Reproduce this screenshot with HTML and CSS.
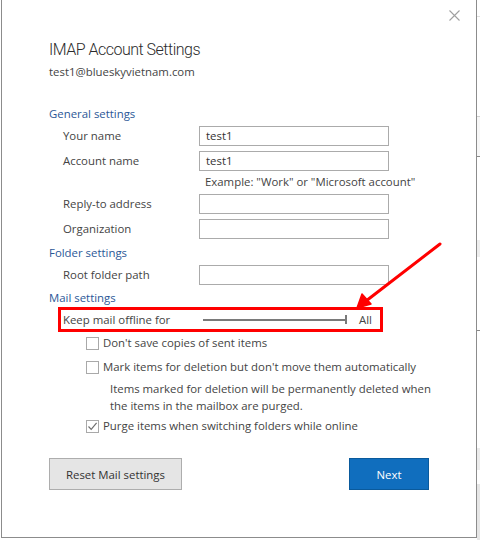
FILE: index.html
```html
<!DOCTYPE html>
<html>
<head>
<meta charset="utf-8">
<link rel="stylesheet" href="styles.css">
</head>
<body>
<div class="screen">
  <div class="edge-left"></div>
  <div class="dialog">
    <div class="topbar">
      <svg class="close" width="11" height="11" viewBox="0 0 11 11"><path d="M0.5 0.5L10.5 10.5M10.5 0.5L0.5 10.5" stroke="#a0a0a0" stroke-width="1.1" fill="none"/></svg>
    </div>
    <div class="title">IMAP Account Settings</div>
    <div class="email">test1@blueskyvietnam.com</div>

    <div class="heading h-general">General settings</div>
    <div class="row r-first"><span class="label">Your name</span><span class="input">test1</span></div>
    <div class="row r-next"><span class="label">Account name</span><span class="input">test1</span></div>
    <div class="hint">Example: "Work" or "Microsoft account"</div>
    <div class="row r-after-hint"><span class="label">Reply-to address</span><span class="input"></span></div>
    <div class="row r-next"><span class="label">Organization</span><span class="input"></span></div>

    <div class="heading h-folder">Folder settings</div>
    <div class="row r-first"><span class="label">Root folder path</span><span class="input"></span></div>

    <div class="heading h-mail">Mail settings</div>
    <div class="offline">
      <span class="offline-label">Keep mail offline for</span>
      <span class="slider"><span class="track"></span><span class="tick"></span></span>
      <span class="all">All</span>
    </div>

    <div class="check c1"><span class="box"></span><span>Don't save copies of sent items</span></div>
    <div class="check c2"><span class="box"></span><span>Mark items for deletion but don't move them automatically</span></div>
    <div class="note">Items marked for deletion will be permanently deleted when<br>the items in the mailbox are purged.</div>
    <div class="check c3"><span class="box checked"><svg width="11" height="11" viewBox="0 0 11 11"><path d="M1.5 5.5L4.2 8.3L9.6 1.8" stroke="#6f6f6f" stroke-width="1.2" fill="none"/></svg></span><span>Purge items when switching folders while online</span></div>

    <div class="buttons">
      <span class="btn btn-reset">Reset Mail settings</span>
      <span class="btn btn-next">Next</span>
    </div>
  </div>
  <div class="edge-right"></div>
</div>
<svg class="arrow" width="480" height="540" viewBox="0 0 480 540">
  <line x1="440" y1="244" x2="366" y2="301" stroke="#ff0000" stroke-width="3" stroke-linecap="round"/>
  <path d="M357 308L362 294L371 304Z" fill="#ff0000" stroke="#ff0000" stroke-width="1.5" stroke-linejoin="round"/>
</svg>
</body>
</html>
```
FILE: styles.css
```css
* { box-sizing: border-box; }
html, body { margin: 0; padding: 0; background: #ffffff; }
body {
  width: 480px;
  height: 540px;
  overflow: hidden;
  position: relative;
  font-family: "Open Sans", "Noto Sans", sans-serif;
  font-size: 11.4px;
  color: #444444;
}
.screen { display: flex; height: 540px; }
.edge-left { width: 1px; background: #ffffff; }
.edge-right {
  flex: 1;
  background:
    linear-gradient(#ffffff 0 16px, #e0e0e0 16px 17px, #ffffff 17px 116px, #d0d0d0 116px 117px, #f7f7f7 117px 156px, #8a8a8a 156px 157px, #ffffff 157px 240px, #eeeeee 240px 257px, #ffffff 257px 330px, #8a8a8a 330px 331px, #ffffff 331px 448px, #ececec 448px 470px, #ffffff 470px 484px, #e6e6e6 484px 540px);
}
.dialog {
  width: 476px;
  height: 538px;
  border-left: 1px solid #8c8c8c;
  border-right: 1px solid #8c8c8c;
  border-bottom: 1px solid #8c8c8c;
  background: #ffffff;
  padding-left: 47px;
}
.topbar {
  height: 30px;
  display: flex;
  justify-content: flex-end;
  align-items: center;
  padding-right: 16px;
}
.title {
  margin-top: 8px;
  font-family: "Roboto", "Open Sans", sans-serif;
  font-weight: 300;
  font-size: 16px;
  letter-spacing: -0.5px;
  line-height: 24px;
  color: #2b2b2b;
}
.email {
  margin-top: 1px;
  line-height: 18px;
  color: #444444;
}
.heading {
  line-height: 18px;
  color: #2b5797;
}
.h-general { margin-top: 24px; }
.h-folder { margin-top: 5px; }
.h-mail { margin-top: 4px; }
.row {
  display: flex;
  align-items: center;
  height: 20px;
  padding-left: 14px;
}
.r-first { margin-top: 3px; }
.r-next { margin-top: 5px; }
.r-after-hint { margin-top: 3px; }
.label { width: 136px; padding-bottom: 2px; }
.input {
  width: 190px;
  height: 20px;
  border: 1px solid #ababab;
  padding-left: 6px;
  line-height: 18px;
  color: #333333;
}
.hint {
  margin-top: 2px;
  padding-left: 156px;
  line-height: 18px;
}
.offline {
  margin-left: 9px;
  width: 325px;
  height: 25px;
  border: 3px solid #ff0000;
  display: flex;
  align-items: center;
  padding-left: 2px;
}
.offline-label { width: 140px; }
.slider {
  display: flex;
  align-items: center;
  width: 144px;
}
.track { flex: 1; height: 2px; background: #7a7a7a; }
.tick { width: 2px; height: 9px; background: #7a7a7a; }
.all { margin-left: 12px; }
.check {
  display: flex;
  align-items: center;
  line-height: 18px;
  padding-left: 37px;
}
.c1 { margin-top: 2px; }
.c2 { margin-top: 6px; }
.c3 { margin-top: 3px; }
.box {
  width: 13px;
  height: 13px;
  border: 1px solid #a9a9a9;
  margin-right: 4px;
  display: flex;
  align-items: center;
  justify-content: center;
}
.note {
  margin-top: 4px;
  padding-left: 61px;
  line-height: 17px;
}
.buttons {
  margin-top: 23px;
  width: 380px;
  display: flex;
  justify-content: space-between;
}
.btn {
  height: 32px;
  display: flex;
  align-items: center;
  justify-content: center;
}
.btn-reset {
  width: 133px;
  background: #e5e5e5;
  border: 1px solid #adadad;
  color: #333333;
}
.btn-next {
  width: 80px;
  background: #106ebe;
  border: 1px solid #0a5a9c;
  color: #ffffff;
}
.arrow {
  position: absolute;
  top: 0;
  left: 0;
  pointer-events: none;
}
```
